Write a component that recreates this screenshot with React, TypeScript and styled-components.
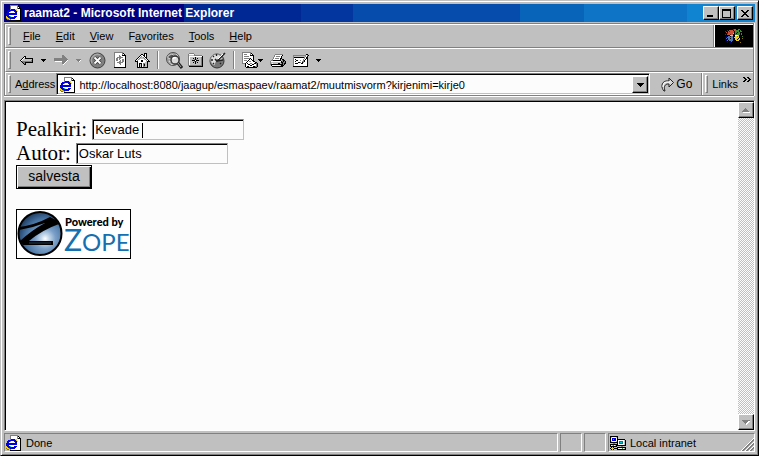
import React from "react";
import styled, { createGlobalStyle, css } from "styled-components";

const Global = createGlobalStyle`
  * { box-sizing: border-box; }
  html, body { margin: 0; height: 100%; }
  #root { height: 100%; }
  body { background: #c0c0c0; font: 12px/14px "Liberation Sans", Arial, sans-serif; color: #000; overflow: hidden; }
  button, input, select { font: inherit; color: inherit; margin: 0; border-radius: 0; outline: none; }
`;

const raised = css`
  border: 1px solid;
  border-color: #fff #000 #000 #fff;
  box-shadow: inset -1px -1px 0 #808080;
  background: #c0c0c0;
`;

const Window = styled.div`
  height: 100vh;
  min-height: 300px;
  display: flex;
  flex-direction: column;
  background: #c0c0c0;
  border: 1px solid;
  border-color: #c0c0c0 #000 #000 #c0c0c0;
  box-shadow: inset 1px 1px 0 #fff, inset -1px -1px 0 #808080;
  padding: 3px 3px 3px 3px;
`;

const TitleBar = styled.header`
  height: 18px;
  flex: none;
  display: flex;
  align-items: center;
  padding: 0 2px 0 2px;
  color: #fff;
  background: linear-gradient(
    90deg,
    #000080 0 24%,
    #002894 24% 39.5%,
    #0436a0 39.5% 46.5%,
    #064cad 46.5% 68.7%,
    #0864b8 68.7% 77.2%,
    #0e74c5 77.2% 91%,
    #1084d0 91%
  );
`;

const Title = styled.h1`
  flex: 1;
  margin: 0 0 0 2px;
  font-size: 12px;
  line-height: 14px;
  font-weight: bold;
  white-space: nowrap;
`;

const CaptionButton = styled.button<{ $apart?: boolean }>`
  ${raised}
  width: 16px;
  height: 14px;
  padding: 0;
  display: flex;
  align-items: center;
  justify-content: center;
  margin-left: ${(p) => (p.$apart ? 2 : 0)}px;
`;

const Bands = styled.div`
  flex: none;
  margin: 1px 1px 0 0;
  border: 1px solid #808080;
  box-shadow: 0 1px 0 #fff, 1px 0 0 #fff;
`;

const Band = styled.div<{ $line?: boolean }>`
  height: ${(p) => (p.$line ? 24 : 23)}px;
  display: flex;
  align-items: center;
  padding-left: 2px;
  border-top: 1px solid #fff;
  border-left: 1px solid #fff;
  border-bottom: ${(p) => (p.$line ? "1px solid #808080" : "none")};
`;

const Grip = styled.span`
  width: 3px;
  height: 18px;
  flex: none;
  border: 1px solid;
  border-color: #fff #808080 #808080 #fff;
`;

const Menu = styled.nav`
  flex: 1;
  display: flex;
  gap: 15px;
  padding-left: 12px;
`;

const MenuItem = styled.button`
  border: 0;
  padding: 0;
  background: none;
  font-size: 11px;
  line-height: 14px;
`;

const Brand = styled.div`
  width: 40px;
  align-self: stretch;
  display: flex;
  align-items: center;
  justify-content: center;
  border-left: 1px solid #808080;
  box-shadow: inset 1px 0 0 #fff;
  background: #000;
`;

const Tools = styled.div`
  display: flex;
  align-items: center;
  gap: 7px;
  padding-left: 9px;
`;

const ToolGroup = styled.div<{ $gap: number }>`
  display: flex;
  align-items: center;
  gap: ${(p) => p.$gap}px;
`;

const ToolButton = styled.button`
  border: 0;
  padding: 0;
  background: none;
  display: flex;
  align-items: center;
`;

const Divider = styled.span`
  width: 2px;
  height: 18px;
  background: #808080;
  border-right: 1px solid #fff;
`;

const AddressLabel = styled.label`
  padding: 0 1px 0 4px;
  font-size: 11px;
`;

const Combo = styled.div`
  flex: 1;
  height: 22px;
  display: flex;
  align-items: center;
  background: #fcfcfc;
  border: 1px solid;
  border-color: #808080 #fff #fff #808080;
  box-shadow: inset 1px 1px 0 #000, inset -1px -1px 0 #c0c0c0;
  padding: 2px 1px 1px 3px;
`;

const UrlInput = styled.input`
  flex: 1;
  min-width: 0;
  border: 0;
  background: none;
  padding: 0 0 0 3px;
  font-size: 11px;
  height: 16px;
`;

const DropButton = styled.button`
  ${raised}
  width: 16px;
  align-self: stretch;
  padding: 0;
  display: flex;
  align-items: center;
  justify-content: center;
`;

const Go = styled.button`
  border: 0;
  padding: 0 9px 0 11px;
  background: none;
  display: flex;
  align-items: center;
  gap: 2px;
`;

const Links = styled.div`
  align-self: stretch;
  display: flex;
  align-items: center;
  gap: 4px;
  padding: 0 2px 0 3px;
  border-left: 1px solid #808080;
  box-shadow: inset 1px 0 0 #fff;
`;

const LinksLabel = styled.span`
  font-size: 11px;
  padding-right: 1px;
`;

const Chevrons = styled(ToolButton)`
  align-self: flex-start;
  padding-top: 4px;
`;

const View = styled.div`
  flex: 1;
  min-height: 0;
  display: flex;
  margin: 4px 0 0 0;
  background: #fcfcfc;
  border: 1px solid;
  border-color: #808080 #fff #fff #808080;
  box-shadow: inset 1px 1px 0 #000;
  padding: 1px 0 0 1px;
`;

const Page = styled.main`
  flex: 1;
  padding: 15px 10px;
  font: 21px/24px "Liberation Serif", "Times New Roman", serif;
`;

const Field = styled.div`
  display: flex;
  align-items: center;
  height: 24px;
  gap: 5px;
`;

const TextBox = styled.input`
  width: 152px;
  height: 21px;
  padding: 0 1px 0 2px;
  background: #fcfcfc;
  border: 1px solid;
  border-color: #808080 #c0c0c0 #c0c0c0 #808080;
  box-shadow: inset 1px 1px 0 #000;
  font: 13px/16px "Liberation Sans", Arial, sans-serif;
`;

const Save = styled.button`
  display: block;
  width: 76px;
  height: 24px;
  padding: 0 0 2px;
  background: #c0c0c0;
  border: 1px solid #000;
  box-shadow: inset 1px 1px 0 #fff, inset -1px -1px 0 #000, inset -2px -2px 0 #808080;
  font: 14px/16px "Liberation Sans", Arial, sans-serif;
`;

const Caret = styled.span`
  width: 1px;
  height: 15px;
  background: #000;
  position: absolute;
  left: 50px;
  top: 4px;
`;

const Editing = styled.span`
  position: relative;
  display: flex;
`;

const LogoLink = styled.a`
  display: inline-block;
  margin-top: 20px;
  border: 1px solid #000;
  background: #fff;
  line-height: 0;
`;

const Scroll = styled.div`
  width: 16px;
  display: flex;
  flex-direction: column;
  justify-content: space-between;
  background: repeating-conic-gradient(#c0c0c0 0 25%, #fcfcfc 0 50%) 0 0 / 2px 2px;
`;

const ScrollButton = styled.button`
  ${raised}
  width: 16px;
  height: 16px;
  padding: 0;
  display: flex;
  align-items: center;
  justify-content: center;
`;

const Status = styled.footer`
  flex: none;
  display: flex;
  gap: 2px;
  height: 20px;
  margin: 1px 0 0 0;
  padding-top: 1px;
`;

const Cell = styled.div<{ $w?: number }>`
  ${(p) => (p.$w ? `width: ${p.$w}px; flex: none;` : "flex: 1;")}
  display: flex;
  align-items: center;
  justify-content: flex-start;
  gap: 4px;
  padding-left: 1px;
  border: 1px solid;
  border-color: #808080 #fff #fff #808080;
  font-size: 11px;
  white-space: nowrap;
`;

const Resize = styled.span`
  margin-left: auto;
  align-self: flex-end;
  line-height: 0;
`;

const Key = ({ text, at }: { text: string; at: number }) => (
  <>
    {text.slice(0, at)}
    <u>{text[at]}</u>
    {text.slice(at + 1)}
  </>
);

const palette: Record<string, string> = {
  k: "#000000", w: "#ffffff", g: "#808080", s: "#c0c0c0", d: "#404040",
  b: "#0000e0", n: "#000080", c: "#00c8d8", t: "#008080", y: "#f0d020", o: "#907800",
  r: "#c85038", e: "#408838", u: "#4878b8", m: "#702018", l: "#e8e8e8",
};

const Pixels = ({ rows }: { rows: string[] }) => {
  const width = Math.max(...rows.map((r) => r.length));
  return (
    <svg width={width} height={rows.length} shapeRendering="crispEdges" aria-hidden="true">
      {rows.flatMap((row, y) =>
        [...row].map((c, x) =>
          palette[c] ? <rect key={`${x}-${y}`} x={x} y={y} width="1" height="1" fill={palette[c]} /> : null
        )
      )}
    </svg>
  );
};

const pageIcon = [
  "....gggggggg....",
  "....gwwwwwwgk...",
  "....gwwwwwwgwk..",
  "....gwwwwwwgkkk.",
  "....gbbbbyywwwk.",
  "..bbbbbbbbywwwk.",
  ".bbbcwwwbbbywwk.",
  ".bbwwwwwwbbwwwk.",
  "bbbbbbbbbbbwwwk.",
  "bbbbbbbbbbbwwwk.",
  "bbbwwwwwwwwwwwk.",
  "ybbbcwwwbbbwwwk.",
  "yybbbbbbbbwwwwk.",
  "oyyobbbbbwwwwwk.",
  ".ooygwwwwwwwwwk.",
  "....kkkkkkkkkkk.",
];
const flagIcon = [
  "........mrr..ee...",
  "..m.rrrrkreeee.e..",
  "m..rmrrrrkeeeekee.",
  ".r.rrrrrrkeekeek.k",
  "..mrrrrrskekeeeke.",
  "m.rrrmrrkkeeeeeke.",
  "..kkkssskkwwwskk..",
  ".n.uukuukkyyoykk.e",
  "n.uuuuuukyyyyykk..",
  ".u.uukuukkyyykyk.o",
  "n..uuuuukkyykyyk..",
  ".nu.uuuukkkyyykk..",
  "...n.nu...kkk.kk..",
  "..n..n.........o..",
];
const networkIcon = [
  "kkkkkkkk........",
  "kswwwwsk........",
  "kwbbbbwk........",
  "kwbcbbwkkkkkkkk.",
  "kwbbbbwkwwwwwwsk",
  "kswwwwskwttttwsk",
  "kkkkkkkkwtcctwsk",
  "..sgg..kwttttwsk",
  "kkkkkkkkwwwwwwsk",
  "kwsewskkkkkkkkkk",
  "kkkkkkk...sgg...",
  ".kyk...kkkkkkkkk",
  "kyyykkkkwwwwewsk",
  ".kyk...kkkkkkkkk",
];
const backIcon = [
  "....kk.......",
  "...kwk.......",
  "..kwskkkkkkkk",
  ".kwsssssssssk",
  "kwsssssssssgk",
  ".kggggggggggk",
  "..kggkkkkkkkk",
  "...kgk.......",
  "....kk.......",
];
const forwardIcon = [
  "........gg....",
  "........ggg...",
  "........gggg..",
  "ggggggggggggg.",
  "gggggggggggggg",
  "gggggggggggggw",
  ".wwwwwwwggggw.",
  "........gggw..",
  "........ggw...",
  ".........w....",
];
const chevrons = ["kk..kk..", ".kk..kk.", "..kk..kk", ".kk..kk.", "kk..kk.."];
const triangle = ["kkkkk", ".kkk.", "..k.."];
const greyTriangle = ["ggggg", ".gggw", "..gw."];
const dropArrow = ["kkkkkkk", ".kkkkk.", "..kkk..", "...k..."];
const upArrow = ["...g....", "..ggg...", ".ggggg..", "ggggggg.", ".wwwwwww"];
const downArrow = ["gggggggg", ".gggggww", "..gggww.", "...gww..", "....w..."];
const homeIcon = [
  ".........kkk...",
  "......kk.kwk...",
  ".....kwwkkwk...",
  "....kwgwwkwk...",
  "...kwgssgwkk...",
  "..kwgssssgwk...",
  ".kwgswwwwsgwk..",
  "kwgwwwkkwwwgwk.",
  "kkkwwwkkwwwskkk",
  "..kwwwwwwwssk..",
  "..kwkkkwggssk..",
  "..kwkskwgkssk..",
  "..kwkskwgkssk..",
  "..kwkskwggssk..",
  "..kkkkkkkkkkk..",
];
const printIcon = [
  ".....gggggggg...",
  "....gwwwwwwwk...",
  "....gwggggwk....",
  "...gwwwwwwwk....",
  "...gwggggwkk....",
  "..gwwwwwwwkskk..",
  ".ggkkkkkkkksgkk.",
  "gwwwwwwwwwwkgkgk",
  "gsssssssssskkggk",
  "gswssssskksgkgkk",
  "gkkkkkkkkkkkkgk.",
  ".kwwwwwwwwskkk..",
  "..kkkkkkkkkkk...",
];
const editIcon = [
  ".............kk.",
  "gggggggggggggwgk",
  "gsssssssssssgwk.",
  "gkkkkkkkkkkgwkk.",
  "gwwwwwwwwwwgwkk.",
  "gwkwwwwwwwgwkwk.",
  "gwwkkwwgwwgkwwk.",
  "gwkwwwwwwggkwwk.",
  "gwwwwkkgwkgwwwk.",
  "gwkkkwwwkkwwwwk.",
  "gwwwwwwwwwwwwwk.",
  "gwwwwwwwwwwwwwk.",
  "kkkkkkkkkkkkkkk.",
];
const mailIcon = [
  "ggggggggg.......",
  "gwwwwwwwgk......",
  "gwgggwwwgwk.....",
  "gwwwwwwwkkkk....",
  "gwgggggwwwwk....",
  "gwwwwwwwwwwk....",
  "gwggggggkwwk....",
  "gwwwwwwkwkwk....",
  "gwgggwkwwwkk....",
  "gwwwwkwggwwkk...",
  "gwwwkwwwwwwwwkk.",
  "gggkwkwwggwwkkgk",
  "...kwwkkwwkkwwgk",
  "...kwwwwkkwwwwgk",
  "...kwkkwwwwkkggk",
  "....kkkkkkkkkkk.",
];
const favIcon = [
  ".ggggg..........",
  "gwwwwwg.........",
  "gsssssgggggggg..",
  "gwwwwwwwwwwwwwk.",
  "gwsssssksssssgk.",
  "gwsssksksksssgk.",
  "gwssssgkgssssgk.",
  "gwsskkkwkkkssgk.",
  "gwssssgkgssssgk.",
  "gwsssksksksssgk.",
  "gwsssssksssssgk.",
  "gwsssssssssssgk.",
  "ggggggggggggggk.",
  ".kkkkkkkkkkkkkk.",
];
const refreshIcon = [
  "ggggggggg....",
  "gwwwwwwwgk...",
  "gwwwwwwwgwk..",
  "gwwwwgwwkkkk.",
  "gwwwwggwwwwk.",
  "gwwggggggwwk.",
  "gwggwggwwwwk.",
  "gwggwgwwggwk.",
  "gwggwwgwggwk.",
  "gwwwwggwggwk.",
  "gwwggggggwwk.",
  "gwwwwggwwwwk.",
  "gwwwwwgwwwwk.",
  "gwwwwwwwwwwk.",
  "gwwwwwwwwwwk.",
  "kkkkkkkkkkkk.",
];

const StopIcon = () => (
  <svg width="17" height="17" viewBox="0 0 17 17" aria-hidden="true">
    <circle cx="8.5" cy="8.5" r="7.5" fill="#808080" stroke="#404040" />
    <path d="M3 11a6 6 0 0 1 8-8" fill="none" stroke="#aaa" strokeWidth="1.4" />
    <path d="M5.5 5.5l6 6m0-6l-6 6" stroke="#404040" strokeWidth="3.6" />
    <path d="M5.5 5.5l6 6m0-6l-6 6" stroke="#fff" strokeWidth="1.8" />
  </svg>
);

const SearchIcon = () => (
  <svg width="17" height="17" viewBox="0 0 17 17" aria-hidden="true">
    <circle cx="7" cy="7" r="6.5" fill="#a0a0a0" stroke="#505050" />
    <path d="M2 4l4-2 2 2-3 3-3-1zM3 9l3 1v3zM10 2l2 2" fill="#555" stroke="#eee" strokeWidth=".7" />
    <circle cx="9" cy="8" r="4" fill="#dadada" stroke="#333" strokeWidth="1.3" />
    <path d="M7 7q1-2 3-1" fill="none" stroke="#fff" strokeWidth="1.4" />
    <path d="M12 11l4 5" stroke="#222" strokeWidth="3" />
    <path d="M12 11l3 4" stroke="#aaa" />
  </svg>
);

const HistoryIcon = () => (
  <svg width="17" height="17" viewBox="0 0 17 17" aria-hidden="true">
    <circle cx="8" cy="9" r="7" fill="#777" stroke="#333" />
    <circle cx="7.5" cy="8" r="6" fill="#e0e0e0" stroke="#888" />
    <path d="M7.5 8L14 9a6 6 0 0 1-9 5z" fill="#777" />
    <path d="M7.5 2v2M2 8h2M4 4l1 1M4 12l1-1M11 11l1 1" stroke="#222" strokeWidth="1.3" />
    <path d="M6 7l2 2L16 1M8 9l6-1" fill="none" stroke="#222" strokeWidth="1.6" />
    <path d="M9 7l5-5" stroke="#fff" />
  </svg>
);

const GoIcon = () => (
  <svg width="13" height="15" viewBox="0 0 13 15" aria-hidden="true">
    <path d="M3 14C0 11 0 5 5 4h3V1l4.500 4.500L8 10V7H6C3 8 3 11 4 14z" fill="#d8d8d8" stroke="#202020" />
    <path d="M2 10C2 7 3 5 6 5h3" fill="none" stroke="#fff" />
  </svg>
);

const MinIcon = () => (
  <svg width="10" height="9" shapeRendering="crispEdges" aria-hidden="true"><path d="M1 6h6v2H1z" /></svg>
);
const MaxIcon = () => (
  <svg width="10" height="9" shapeRendering="crispEdges" aria-hidden="true">
    <path fillRule="evenodd" d="M0 0h9v9H0zM1 2v6h7V2z" />
  </svg>
);
const closeIcon = ["kk....kk", ".kk..kk.", "..kkkk..", "...kk...", "..kkkk..", ".kk..kk.", "kk....kk"];

const ResizeIcon = () => (
  <svg width="13" height="13" shapeRendering="crispEdges" aria-hidden="true">
    <path d="M0 13L13 0M4 13L13 4M8 13l5-5" stroke="#fff" />
    <path d="M1 13L13 1M2 13L13 2M5 13l8-8M6 13l7-7M9 13l4-4M10 13l3-3" stroke="#808080" />
  </svg>
);

const ZopeLogo = () => (
  <svg width="113" height="48" viewBox="0 0 113 48" role="img" aria-label="Powered by Zope">
    <defs>
      <radialGradient id="globe" cx="62%" cy="62%" r="66%">
        <stop offset="0" stopColor="#fff" />
        <stop offset=".14" stopColor="#c4d8ea" />
        <stop offset=".36" stopColor="#7ba0c8" />
        <stop offset=".72" stopColor="#44709f" />
        <stop offset="1" stopColor="#1c3a5c" />
      </radialGradient>
    </defs>
    <circle cx="23" cy="23.5" r="21.5" fill="url(#globe)" stroke="#000" strokeWidth="2" />
    <path d="M2 17Q18 15 33 7L39 10L42 14Q25 20 12 31H36V35H6L3 31Q15 20 28 13Q15 18 2 20Z" fill="#000" />
    <path d="M12 33h22" stroke="#45678a" strokeWidth=".6" />
    <text x="48" y="16" fontFamily="Lato, sans-serif" fontWeight="900" fontSize="11">Powered by</text>
    <text x="47" y="41" fontFamily="Lato, sans-serif" fontSize="24" fill="#1470b0">
      <tspan fontSize="30">Z</tspan>OPE
    </text>
  </svg>
);

const menus: [string, number][] = [["File", 0], ["Edit", 0], ["View", 0], ["Favorites", 1], ["Tools", 0], ["Help", 0]];

export default function App() {
  return (
    <>
      <Global />
      <Window>
        <TitleBar>
          <Pixels rows={pageIcon} />
          <Title>raamat2 - Microsoft Internet Explorer</Title>
          <CaptionButton aria-label="Minimize"><MinIcon /></CaptionButton>
          <CaptionButton aria-label="Maximize"><MaxIcon /></CaptionButton>
          <CaptionButton aria-label="Close" $apart><Pixels rows={closeIcon} /></CaptionButton>
        </TitleBar>
        <Bands>
          <Band $line>
            <Grip />
            <Menu>
              {menus.map(([text, at]) => (
                <MenuItem key={text}><Key text={text} at={at} /></MenuItem>
              ))}
            </Menu>
            <Brand><Pixels rows={flagIcon} /></Brand>
          </Band>
          <Band $line>
            <Grip />
            <Tools>
              <ToolGroup $gap={8}>
                <ToolButton aria-label="Back"><Pixels rows={backIcon} /></ToolButton>
                <ToolButton aria-label="Back history"><Pixels rows={triangle} /></ToolButton>
                <ToolButton aria-label="Forward"><Pixels rows={forwardIcon} /></ToolButton>
                <ToolButton aria-label="Forward history"><Pixels rows={greyTriangle} /></ToolButton>
                <ToolButton aria-label="Stop"><StopIcon /></ToolButton>
                <ToolButton aria-label="Refresh"><Pixels rows={refreshIcon} /></ToolButton>
                <ToolButton aria-label="Home"><Pixels rows={homeIcon} /></ToolButton>
              </ToolGroup>
              <Divider />
              <ToolGroup $gap={5}>
                <ToolButton aria-label="Search"><SearchIcon /></ToolButton>
                <ToolButton aria-label="Favorites folder"><Pixels rows={favIcon} /></ToolButton>
                <ToolButton aria-label="History"><HistoryIcon /></ToolButton>
              </ToolGroup>
              <Divider />
              <ToolGroup $gap={7}>
                <ToolButton aria-label="Mail"><Pixels rows={mailIcon} /><Pixels rows={triangle} /></ToolButton>
                <ToolButton aria-label="Print"><Pixels rows={printIcon} /></ToolButton>
                <ToolButton aria-label="Edit page"><Pixels rows={editIcon} /></ToolButton>
                <ToolButton aria-label="Edit options"><Pixels rows={triangle} /></ToolButton>
              </ToolGroup>
            </Tools>
          </Band>
          <Band>
            <Grip />
            <AddressLabel htmlFor="url"><Key text="Address" at={1} /></AddressLabel>
            <Combo>
              <Pixels rows={pageIcon} />
              <UrlInput id="url" defaultValue="http://localhost:8080/jaagup/esmaspaev/raamat2/muutmisvorm?kirjenimi=kirje0" />
              <DropButton aria-label="Show addresses"><Pixels rows={dropArrow} /></DropButton>
            </Combo>
            <Go><GoIcon />Go</Go>
            <Links>
              <Grip />
              <LinksLabel>Links</LinksLabel>
              <Chevrons aria-label="More links"><Pixels rows={chevrons} /></Chevrons>
            </Links>
          </Band>
        </Bands>
        <View>
          <Page>
            <Field>
              <label htmlFor="title">Pealkiri:</label>
              <Editing>
                <TextBox id="title" defaultValue="Kevade" />
                <Caret />
              </Editing>
            </Field>
            <Field>
              <label htmlFor="author">Autor:</label>
              <TextBox id="author" defaultValue="Oskar Luts" />
            </Field>
            <Save>salvesta</Save>
            <LogoLink href="#zope"><ZopeLogo /></LogoLink>
          </Page>
          <Scroll>
            <ScrollButton aria-label="Scroll up"><Pixels rows={upArrow} /></ScrollButton>
            <ScrollButton aria-label="Scroll down"><Pixels rows={downArrow} /></ScrollButton>
          </Scroll>
        </View>
        <Status>
          <Cell><Pixels rows={pageIcon} />Done</Cell>
          <Cell $w={22} />
          <Cell $w={22} />
          <Cell $w={147}>
            <Pixels rows={networkIcon} />Local intranet
            <Resize><ResizeIcon /></Resize>
          </Cell>
        </Status>
      </Window>
    </>
  );
}
